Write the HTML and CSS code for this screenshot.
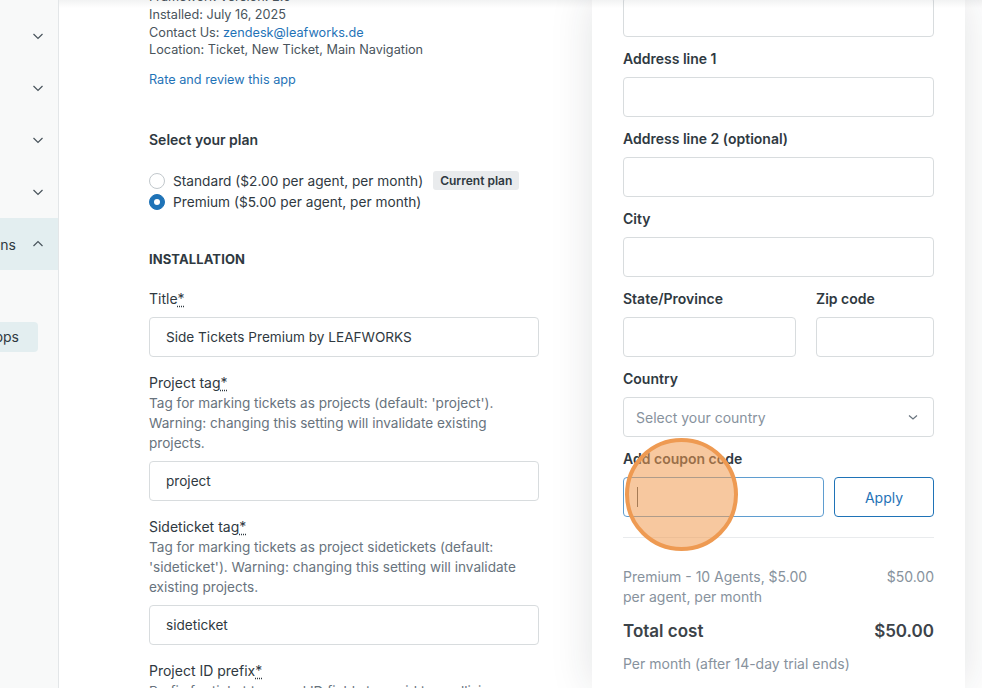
FILE: index.html
```html
<!DOCTYPE html>
<html lang="en">
<head>
<meta charset="utf-8">
<title>Side Tickets Premium</title>
<link rel="stylesheet" href="styles.css">
</head>
<body>
<div class="app">
  <aside class="sidebar">
    <ul class="nav">
      <li class="nav-item"><span class="nav-label">Account</span><svg class="chev" viewBox="0 0 12 12"><path d="M1.5 4l4.5 4.5L10.5 4"/></svg></li>
      <li class="nav-item"><span class="nav-label">People</span><svg class="chev" viewBox="0 0 12 12"><path d="M1.5 4l4.5 4.5L10.5 4"/></svg></li>
      <li class="nav-item"><span class="nav-label">Channels</span><svg class="chev" viewBox="0 0 12 12"><path d="M1.5 4l4.5 4.5L10.5 4"/></svg></li>
      <li class="nav-item"><span class="nav-label">Workspaces</span><svg class="chev" viewBox="0 0 12 12"><path d="M1.5 4l4.5 4.5L10.5 4"/></svg></li>
      <li class="nav-item active"><span class="nav-label">Apps and integrations</span><svg class="chev" viewBox="0 0 12 12"><path d="M1.5 8l4.5-4.5L10.5 8"/></svg></li>
    </ul>
    <div class="subnav"><span class="sub-pill">Zendesk Support apps</span></div>
  </aside>

  <main class="content">
    <div class="info">
      <p>Framework Version: 2.0</p>
      <p>Installed: July 16, 2025</p>
      <p>Contact Us: <a href="#">zendesk@leafworks.de</a></p>
      <p>Location: Ticket, New Ticket, Main Navigation</p>
    </div>
    <a class="rate" href="#">Rate and review this app</a>

    <h3 class="plan-title">Select your plan</h3>
    <div class="radios">
      <label class="radio"><span class="dot"></span>Standard ($2.00 per agent, per month)<span class="badge">Current plan</span></label>
      <label class="radio"><span class="dot checked"></span>Premium ($5.00 per agent, per month)</label>
    </div>

    <h4 class="section">INSTALLATION</h4>

    <div class="field">
      <div class="flabel">Title<abbr>*</abbr></div>
      <div class="input">Side Tickets Premium by LEAFWORKS</div>
    </div>
    <div class="field">
      <div class="flabel">Project tag<abbr>*</abbr></div>
      <div class="hint">Tag for marking tickets as projects (default: 'project'). Warning: changing this setting will invalidate existing projects.</div>
      <div class="input">project</div>
    </div>
    <div class="field">
      <div class="flabel">Sideticket tag<abbr>*</abbr></div>
      <div class="hint">Tag for marking tickets as project sidetickets (default: 'sideticket'). Warning: changing this setting will invalidate existing projects.</div>
      <div class="input">sideticket</div>
    </div>
    <div class="field">
      <div class="flabel">Project ID prefix<abbr>*</abbr></div>
      <div class="hint">Prefix for ticket tags and ID fields to avoid tag collisions.</div>
    </div>
  </main>

  <div class="drawer-area">
    <section class="drawer">
      <div class="dinput top"></div>
      <div class="dfield"><div class="dlabel">Address line 1</div><div class="dinput"></div></div>
      <div class="dfield"><div class="dlabel">Address line 2 (optional)</div><div class="dinput"></div></div>
      <div class="dfield"><div class="dlabel">City</div><div class="dinput"></div></div>
      <div class="drow">
        <div class="dfield grow"><div class="dlabel">State/Province</div><div class="dinput"></div></div>
        <div class="dfield zip"><div class="dlabel">Zip code</div><div class="dinput"></div></div>
      </div>
      <div class="dfield"><div class="dlabel">Country</div>
        <div class="dinput select"><span>Select your country</span><svg class="schev" viewBox="0 0 12 12"><path d="M2 4.5l4 3.5 4-3.5"/></svg></div>
      </div>
      <div class="dfield"><div class="dlabel">Add coupon code</div>
        <div class="coupon">
          <div class="dinput focus"><span class="caret"></span></div>
          <button class="apply">Apply</button>
        </div>
      </div>
      <hr class="divider">
      <div class="line-item">
        <span class="li-desc">Premium - 10 Agents, $5.00 per agent, per month</span>
        <span>$50.00</span>
      </div>
      <div class="total"><span>Total cost</span><span>$50.00</span></div>
      <div class="note">Per month (after 14-day trial ends)</div>
    </section>
  </div>

  <div class="top-shadow"></div>
  <div class="click-marker"></div>
</div>
</body>
</html>
```

FILE: styles.css
```css
* { box-sizing: border-box; }
html, body { margin: 0; padding: 0; }
body {
  font-family: Inter, "Noto Sans", "Liberation Sans", sans-serif;
  color: #2f3941;
  background: #fff;
  width: 982px;
  height: 688px;
  overflow: hidden;
}
.app {
  position: relative;
  display: flex;
  height: 688px;
  overflow: hidden;
}

/* Sidebar */
.sidebar {
  width: 59px;
  flex: none;
  background: #f8f9f9;
  border-right: 1px solid #e3e6e8;
  overflow: hidden;
  padding-top: 10px;
}
.nav { list-style: none; margin: 0; padding: 0; }
.nav-item {
  height: 52px;
  display: flex;
  align-items: center;
  justify-content: flex-end;
  gap: 16px;
  padding-right: 14px;
  font-size: 14px;
  color: #2f3941;
  white-space: nowrap;
}
.nav-item .nav-label { visibility: hidden; }
.nav-item.active { background: #e3eef0; }
.nav-item.active .nav-label { visibility: visible; }
.chev { width: 12px; height: 12px; flex: none; fill: none; stroke: #49545c; stroke-width: 1.2; }
.subnav {
  margin-top: 52px;
  display: flex;
  justify-content: flex-end;
  padding-right: 20px;
}
.sub-pill {
  background: #e3eef0;
  border-radius: 4px;
  height: 30px;
  line-height: 30px;
  padding: 0 19px 0 12px;
  font-size: 14px;
  white-space: nowrap;
  flex: none;
}

/* Main content */
.content {
  width: 506px;
  flex: none;
  padding-left: 90px;
  padding-top: 0;
  margin-top: -12px;
  font-size: 12.7px;
}
.info p { margin: 0; line-height: 17.8px; color: #49545c; }
a { color: #1f73b7; text-decoration: none; }
.rate { display: block; margin-top: 12px; line-height: 18px; }
.plan-title {
  margin: 41px 0 0;
  font-size: 14px;
  font-weight: 600;
  line-height: 20px;
}
.radios { margin-top: 20px; }
.radio {
  display: flex;
  align-items: center;
  height: 21px;
  font-size: 13.7px;
  color: #2f3941;
}
.dot {
  width: 16px; height: 16px;
  border: 1px solid #c2c8cc;
  border-radius: 50%;
  margin-right: 8px;
  flex: none;
  background: #fff;
}
.dot.checked {
  background: #1f73b7;
  border-color: #1f73b7;
  position: relative;
}
.dot.checked::after {
  content: "";
  position: absolute;
  left: 4px; top: 4px;
  width: 6px; height: 6px;
  border-radius: 50%;
  background: #fff;
}
.badge {
  margin-left: 10px;
  background: #e9ebed;
  border-radius: 3px;
  font-size: 12px;
  font-weight: 600;
  padding: 0 7px;
  height: 19px;
  line-height: 19px;
  color: #2f3941;
}
.section {
  margin: 37px 0 0;
  font-size: 13px;
  font-weight: 700;
  line-height: 20px;
  letter-spacing: 0.1px;
}
.field { margin-top: 20px; width: 390px; }
.field + .field { margin-top: 16px; }
.flabel { font-size: 14px; line-height: 20px; color: #2f3941; }
abbr { text-decoration: underline dotted; text-underline-offset: 2px; }
.hint { font-size: 13.6px; line-height: 20px; color: #68737d; }
.input {
  margin-top: 8px;
  height: 40px;
  border: 1px solid #d8dcde;
  border-radius: 4px;
  padding: 0 16px;
  display: flex;
  align-items: center;
  font-size: 13.6px;
  color: #2f3941;
}

/* Drawer */
.drawer-area {
  flex: 1;
  display: flex;
  padding-left: 27px;
}
.drawer {
  width: 373px;
  flex: none;
  background: #fff;
  box-shadow: 0 0 40px rgba(30, 40, 50, 0.13);
  padding: 0 31px;
  margin-top: -3px;
  font-size: 14px;
}
.dfield { margin-top: 12px; }
.dlabel { font-size: 14px; font-weight: 600; line-height: 20px; color: #2f3941; }
.dinput {
  height: 40px;
  border: 1px solid #d8dcde;
  border-radius: 4px;
  margin-top: 8px;
}
.dinput.top { margin-top: 0; }
.drow { display: flex; gap: 20px; }
.drow .grow { flex: 1; }
.drow .zip { width: 118px; flex: none; }
.select {
  display: flex;
  align-items: center;
  justify-content: space-between;
  padding: 0 14px 0 12px;
  color: #87929d;
}
.schev { width: 12px; height: 12px; fill: none; stroke: #68737d; stroke-width: 1.2; }
.coupon { display: flex; gap: 10px; margin-top: 8px; }
.coupon .dinput { margin-top: 0; flex: 1; }
.dinput.focus { border-color: #5f9dd0; display: flex; align-items: center; padding-left: 13px; }
.caret { width: 1px; height: 20px; background: #49545c; }
.apply {
  width: 100px;
  height: 40px;
  border: 1px solid #1f73b7;
  border-radius: 4px;
  background: #fff;
  color: #1f73b7;
  font: inherit;
  font-size: 14px;
}
.divider { border: 0; border-top: 1px solid #e9ebed; margin: 20px 0 0; }
.line-item {
  margin-top: 29px;
  display: flex;
  justify-content: space-between;
  align-items: flex-start;
  color: #87929d;
  line-height: 20px;
}
.li-desc { width: 190px; }
.total {
  margin-top: 12px;
  display: flex;
  justify-content: space-between;
  font-size: 17px;
  font-weight: 600;
  line-height: 24px;
  color: #3c4349;
}
.note { margin-top: 11px; color: #87929d; line-height: 20px; }

/* Overlays */
.top-shadow {
  position: absolute;
  left: 59px;
  right: 0;
  top: 0;
  height: 8px;
  background: linear-gradient(to bottom, rgba(30, 40, 50, 0.06), rgba(30, 40, 50, 0));
  pointer-events: none;
}
.click-marker {
  position: absolute;
  left: 625px;
  top: 438px;
  width: 113px;
  height: 113px;
  border-radius: 50%;
  background: rgba(240, 155, 80, 0.55);
  border: 4px solid #ee9a52;
}
```
